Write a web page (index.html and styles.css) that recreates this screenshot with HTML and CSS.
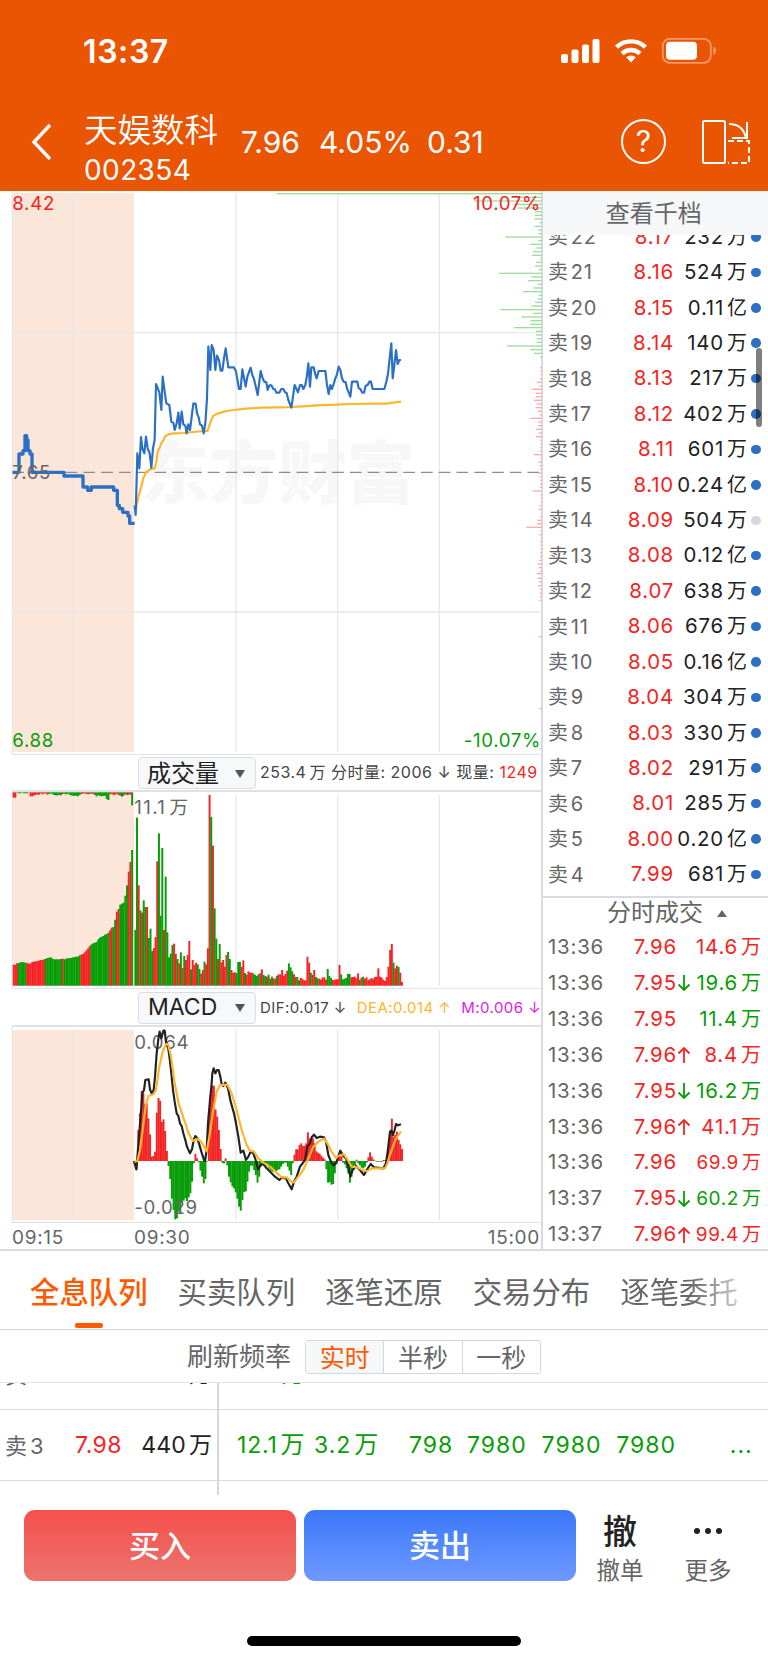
FILE: index.html
```
<!DOCTYPE html>
<html lang="zh-CN">
<head>
    <meta charset="UTF-8">
    <meta name="viewport" content="width=device-width, initial-scale=1.0">
    <title>天娱数科 002354</title>
    <link rel="stylesheet" href="styles.css">
</head>
<body>
    <div class="header">
        <div class="status">
            <span class="clock">13:37</span>
            <svg class="status_icons" width="157" height="28" viewBox="0 0 157 28">
                <g fill="#fff">
                    <rect x="1" y="17" width="7" height="9" rx="2"/>
                    <rect x="11.5" y="12.5" width="7" height="13.5" rx="2"/>
                    <rect x="22" y="7.5" width="7" height="18.5" rx="2"/>
                    <rect x="32.5" y="2" width="7" height="24" rx="2"/>
                    <path d="M71 25.5l-4.8-5.2a7.2 7.2 0 0 1 9.6 0z"/>
                </g>
                <g fill="none" stroke="#fff" stroke-width="4.4">
                    <path d="M56.5 10.2a21 21 0 0 1 29 0"/>
                    <path d="M62 16.6a13 13 0 0 1 18 0"/>
                </g>
                <rect x="102.8" y="1.8" width="48" height="24" rx="7" fill="none" stroke="#fff" stroke-opacity=".4" stroke-width="1.8"/>
                <rect x="106" y="4.8" width="31" height="18" rx="4" fill="#fff"/>
                <path d="M153.3 9.5c3.6 1 3.6 7.400 0 8.400z" fill="#fff" fill-opacity=".4"/>
            </svg>
        </div>
        <div class="title_bar">
            <svg class="back" width="24" height="40" viewBox="0 0 24 40"><path d="M20 3L4 20l16 17" fill="none" stroke="#fff" stroke-width="3.4"/></svg>
            <div class="stock">
                <div class="stock_name">天娱数科</div>
                <div class="stock_code">002354</div>
            </div>
            <div class="quote"><span class="q1">7.96</span><span class="q2">4.05%</span><span>0.31</span></div>
            <div class="help">?</div>
            <svg class="rotate" width="50" height="46" viewBox="0 0 50 46" fill="none" stroke="#fff" stroke-width="2">
                <rect x="2" y="2" width="22" height="42" rx="1.500"/>
                <path d="M28 5c9 0 15 5 17 14M46 3v16H31"/>
                <path d="M27 22h21v22H27" stroke-dasharray="6 3"/>
            </svg>
        </div>
    </div>

    <div class="main">
        <div class="charts">
            <svg class="price" viewBox="0 18 1626 1689">
                <rect class="pre" x="38" y="24" width="364" height="1677"/>
                <text class="mark" x="422" y="939">东方财富</text>
                <path class="grid" d="M37 18v1689M219 24v1677M708 24v1677M1013 24v1677M1318 24v1677M37 443h1589M37 1281h1589"/>
                <path class="dash" d="M37 862h1589"/>
                <g id="depth"></g>
                <polyline class="avg" points="407,975 412,950 418,925 424,905 429,882 438,862 450,853 464,850 468,835 474,797 480,786 485,772 490,767 496,753 505,748 520,745 550,744 580,741 610,738 622,738 627,725 632,710 640,692 655,685 680,678 700,675 740,671 780,668 840,667 874,666 910,664 950,661 1010,659 1050,657 1110,656 1160,656 1180,653 1203,650"/>
                <polyline class="now pre_line" points="38,862 57,862 57,807 69,807 69,797 75,797 75,752 80,752 80,765 84,765 84,797 90,797 90,807 96,807 96,862 192,862 192,873 249,873 249,906 263,906 263,916 274,916 274,906 341,906 341,916 352,916 352,961 358,961 358,971 368,971 368,982 384,982 384,993 389,993 389,1015 404,1015"/>
                <polyline class="now" points="404,961 407,990 412,805 418,850 423,756 427,790 433,805 438,755 443,790 449,805 454,848 459,790 464,765 468,597 478,622 484,675 488,575 494,620 499,655 508,660 514,710 520,713 524,735 530,715 535,683 539,730 545,680 550,718 556,722 560,745 565,718 570,735 580,656 587,656 591,685 596,697 600,718 606,722 611,745 616,715 621,640 625,485 631,555 635,480 641,495 646,555 651,512 657,525 662,557 667,557 672,520 677,490 685,547 702,547 708,560 717,612 722,612 727,553 737,605 742,575 752,548 757,570 762,582 773,630 782,558 788,580 793,590 799,592 803,615 808,601 814,601 820,612 825,613 829,623 838,623 844,612 850,612 855,622 860,624 865,645 874,668 879,635 884,600 894,622 900,600 905,600 910,612 916,600 921,570 925,535 930,605 934,547 941,547 945,565 950,580 956,558 976,558 981,600 986,627 991,600 996,612 1001,597 1006,580 1011,568 1016,545 1021,555 1026,580 1031,590 1037,592 1041,610 1051,635 1056,590 1072,590 1076,610 1081,612 1087,623 1092,623 1097,602 1103,600 1108,590 1113,590 1118,612 1153,612 1159,590 1164,567 1169,520 1174,475 1178,580 1183,540 1188,495 1193,537 1198,525 1203,525"/>
                <text class="axis up" x="37" y="76">8.42</text>
                <text class="axis up end" x="1623" y="76">10.07%</text>
                <text class="axis" x="37" y="882">7.65</text>
                <text class="axis down" x="37" y="1685">6.88</text>
                <text class="axis down end" x="1623" y="1685">-10.07%</text>
            </svg>

            <div class="info">
                <div class="select"><span>成交量</span><i></i></div>
                <div class="info_text vol_text"><span>253.4<b>万</b> 分时量: 2006 ↓ 现量: </span><span class="up">1249</span></div>
            </div>
            <svg class="volume" viewBox="0 186 1626 588">
                <rect class="pre" x="38" y="188" width="364" height="579"/>
                <path class="grid" d="M37 186v588M219 195v572M708 195v572M1013 195v572M1318 195v572"/>
                <g id="preBars"></g>
                <g id="topBars"></g>
                <g id="volBars"></g>
                <text class="axis vol_max" x="403" y="252">11.1<tspan dx="10">万</tspan></text>
            </svg>

            <div class="info">
                <div class="select macd_select"><span>MACD</span><i></i></div>
                <div class="info_text macd_text"><span>DIF:0.017 ↓</span><span class="dea">DEA:0.014 ↑</span><span class="m">M:0.006 ↓</span></div>
            </div>
            <svg class="macd" viewBox="0 141 1626 585">
                <rect class="pre" x="38" y="150" width="364" height="570"/>
                <path class="grid" d="M37 141v585M219 150v570M708 150v570M1013 150v570M1318 150v570"/>
                <g id="macdBars"></g>
                <text class="axis" x="403" y="207">0.064</text>
                <text class="axis" x="403" y="702">-0.029</text>
                <polyline class="dif_line" points="402,543 409,568 413,520 417,470 421,420 427,340 432,330 436,300 446,298 450,328 455,340 461,330 465,290 470,220 476,170 479,155 484,175 490,152 494,152 499,195 504,200 509,235 514,280 519,330 524,365 530,400 535,408 540,430 545,438 550,460 556,480 561,500 570,520 576,508 581,480 586,468 592,475 597,490 604,515 612,540 615,543 620,510 624,430 630,360 635,310 637,280 641,265 646,280 651,270 656,270 661,290 665,312 670,318 676,308 684,325 692,365 702,400 708,430 715,470 722,518 730,512 738,540 745,530 752,515 760,520 767,540 774,568 782,555 790,552 800,565 815,580 825,590 838,600 845,593 858,595 864,608 875,628 882,605 890,590 900,560 915,540 922,500 930,490 935,472 942,464 950,474 960,470 972,472 978,485 985,525 995,550 1002,556 1010,545 1021,512 1030,528 1038,535 1045,560 1051,590 1058,570 1068,558 1080,570 1092,585 1100,570 1112,552 1122,562 1150,565 1158,550 1165,500 1170,455 1174,452 1179,465 1184,450 1188,432 1194,436 1203,433"/>
                <polyline class="dea_line" points="404,546 412,543 420,510 428,450 438,370 446,348 460,343 468,330 478,260 488,215 498,192 505,195 513,230 524,310 536,370 556,430 566,460 578,483 590,477 602,483 612,500 620,514 628,470 640,390 650,335 660,315 682,314 695,340 710,390 725,450 740,495 750,512 762,515 775,535 790,548 810,560 830,578 845,592 860,592 875,606 882,607 895,590 910,570 925,535 940,500 955,485 972,476 982,490 995,515 1008,534 1020,525 1032,523 1043,540 1055,560 1072,562 1090,572 1102,573 1115,565 1155,565 1162,550 1175,510 1188,475 1203,455"/>
            </svg>
            <div class="times"><span class="t1">09:15</span><span>09:30</span><span class="t3">15:00</span></div>
        </div>

        <div class="side">
            <div class="side_head">查看千档</div>
            <div class="book">
                <div class="book_rows" id="book"></div>
                <div class="scrollbar"></div>
            </div>
            <div class="trade_head">分时成交<i></i></div>
            <div class="trades" id="trades"></div>
        </div>
    </div>

    <div class="tabs">
        <span class="tab on">全息队列</span>
        <span class="tab">买卖队列</span>
        <span class="tab">逐笔还原</span>
        <span class="tab">交易分布</span>
        <span class="tab">逐笔委托</span>
    </div>

    <div class="rate">
        <span class="rate_label">刷新频率</span>
        <div class="seg"><span class="on">实时</span><span>半秒</span><span>一秒</span></div>
    </div>

    <div class="queue">
        <div class="q_row q_first">
            <div class="q_left"><span class="q_name">卖<b>4</b></span><span class="q_price">7.99</span><span class="q_vol">681<b>万</b></span></div>
            <div class="q_right"><span class="c1">1.2<b>万</b></span></div>
        </div>
        <div class="q_row">
            <div class="q_left"><span class="q_name">卖<b>3</b></span><span class="q_price">7.98</span><span class="q_vol">440<b>万</b></span></div>
            <div class="q_right"><span class="c1">12.1<b>万</b></span><span class="c2">3.2<b>万</b></span><span class="c3">798</span><span class="c4">7980</span><span class="c4">7980</span><span class="c4">7980</span><span class="more">...</span></div>
        </div>
        <div class="q_row">
            <div class="q_left"></div>
            <div class="q_right"></div>
        </div>
    </div>

    <div class="bottom">
        <a class="btn buy">买入</a>
        <a class="btn sell">卖出</a>
        <div class="tool"><span class="tool_icon">撤</span><span>撤单</span></div>
        <div class="tool tool_more">
            <span class="tool_icon"><svg width="30" height="8" viewBox="0 0 30 8"><circle cx="4" cy="4" r="3"/><circle cx="15" cy="4" r="3"/><circle cx="26" cy="4" r="3"/></svg></span>
            <span>更多</span>
        </div>
    </div>
    <div class="home"></div>

<script>
    var RED = '#f52424';
    var GREEN = '#069d06';

    // 卖盘: 价格 数量 单位
    var asks = ['8.17 232 万', '8.16 524 万', '8.15 0.11 亿', '8.14 140 万', '8.13 217 万', '8.12 402 万', '8.11 601 万',
        '8.10 0.24 亿', '8.09 504 万', '8.08 0.12 亿', '8.07 638 万', '8.06 676 万', '8.05 0.16 亿', '8.04 304 万',
        '8.03 330 万', '8.02 291 万', '8.01 285 万', '8.00 0.20 亿', '7.99 681 万'];
    document.getElementById('book').innerHTML = asks.map(function (row, i) {
        var a = row.split(' ');
        var no = 22 - i;
        return '<div class="book_row"><span class="name">卖<b>' + no + '</b></span><span class="p">' + a[0] +
            '</span><span class="v">' + a[1] + '<b>' + a[2] + '</b></span><i class="dot' + (no === 14 ? ' gray' : '') + '"></i></div>';
    }).join('');

    // 成交: 时间 价格 箭头 数量 颜色
    var deals = ['13:36 7.96 - 14.6 up', '13:36 7.95 ↓ 19.6 down', '13:36 7.95 - 11.4 down', '13:36 7.96 ↑ 8.4 up',
        '13:36 7.95 ↓ 16.2 down', '13:36 7.96 ↑ 41.1 up', '13:36 7.96 - 69.9 up small', '13:37 7.95 ↓ 60.2 down small', '13:37 7.96 ↑ 99.4 up small'];
    var arrows = {
        '↓': '<svg width="14" height="18" viewBox="0 0 14 18"><path d="M7 1v15M1.500 10.500L7 16l5.500-5.500"/></svg>',
        '↑': '<svg width="14" height="18" viewBox="0 0 14 18"><path d="M7 17V2M1.500 7.500L7 2l5.500 5.500"/></svg>',
        '-': ''
    };
    document.getElementById('trades').innerHTML = deals.map(function (row) {
        var a = row.split(' ');
        return '<div class="trade"><span class="t">' + a[0] + '</span><span class="p">' + a[1] + '</span><span class="arrow ' + a[4] + '">' +
            arrows[a[2]] + '</span><span class="v ' + a[4] + ' ' + (a[5] || '') + '">' + a[3] + '<b>万</b></span></div>';
    }).join('');

    function rect(x, y, w, h, color) {
        return '<rect x="' + x.toFixed(1) + '" y="' + y + '" width="' + w + '" height="' + h + '" fill="' + color + '"/>';
    }

    // 挂单分布
    var depth = '26:20 37:727 48:612 58:733 69:742 80:795 91:795 102:793 113:808 124:793 135:805 146:805 156:706 167:805 178:780 189:800 200:790 211:786 222:810 232:797 243:795 254:806 265:687 276:784 287:774 298:803 309:789 320:759 331:807 342:803 352:795 363:784 374:691 385:788 396:754 407:782 418:780 428:732 439:798 450:798 461:800 472:800 483:711 494:780 505:792 516:810 ' +
        '548:810 559:811 570:812 581:810 592:801 603:809 613:785 625:798 635:798 646:791 657:800 668:797 679:803 690:810 700:781 711:803 722:805 733:798 744:806 755:798 766:810 777:812 788:811 799:809 809:792 820:811 831:806 842:809 853:810 864:804 875:811 886:811 897:810 907:809 918:788 929:811 940:812 951:812 962:809 973:806 984:812 995:811 1006:802 1016:801 1027:769 1038:811 1049:808 1060:812 1070:810 1081:811 1092:811 1103:810 1115:810 1126:808 1137:802 1148:806 1159:810 1166:800 1180:802 1191:807 1202:805 1213:810 1224:809 1235:810 1246:808 1355:807 1571:808 1691:810';
    document.getElementById('depth').innerHTML = depth.split(' ').map(function (s) {
        var a = s.split(':');
        var x = 810 + Number(a[1]);
        return rect(x, a[0] - 2, 1626 - x, 4, a[0] < 530 ? '#9fdc9f' : '#ffabab');
    }).join('');

    // 柱状图, r 红 g 绿
    function bars(id, data, x0, x1, base) {
        var list = data.split(' ');
        var w = (x1 - x0) / list.length;
        document.getElementById(id).innerHTML = list.map(function (s, i) {
            var y = Number(s.slice(1));
            return rect(x0 + i * w, Math.min(y, base), (w + 0.8).toFixed(2), Math.abs(base - y), s[0] === 'r' ? RED : GREEN);
        }).join('');
    }
    bars('preBars', 'r704 r704 r700 g699 g697 g696 g697 g698 r699 r701 r700 r696 r695 r694 r693 r692 r690 r690 r688 g686 g684 g683 g682 g686 g688 g688 g688 g688 g687 r686 g688 g686 g685 g684 g684 g682 g681 g680 g680 g676 r674 r672 r667 r661 r655 r648 g643 g640 g638 g636 g628 g623 g620 g618 g614 g612 g608 r601 r593 g591 g569 r545 r537 g524 g521 g518 g497 g466 r425 r396 g360', 38, 398.5, 767);
    bars('topBars', 'r203 r203 r188 g190 g190 g188 g190 g190 g190 g188 r199 r199 r196 r195 r193 r194 g190 r193 g190 r191 r194 g192 g190 g193 g195 g196 g196 g195 g196 r192 g191 g193 g191 g194 g196 g197 g198 g197 g199 g195 r192 r191 g190 r192 r193 g191 r192 r191 g195 g199 g196 g197 g199 g198 g197 g207 g210 r193 g191 r195 r194 r191 g195 r197 g200 g197 g193 r195 r194 r194 g226', 38, 398.5, 187);
    bars('volBars', 'g600 g263 r466 g541 r548 g511 g531 r531 g624 g596 g663 r654 r621 r394 g310 g557 g354 r600 g440 g607 g682 g671 g645 r641 r672 g687 r700 g667 r714 g678 r690 r675 r633 g718 r690 r705 r698 g703 g717 r731 r720 g695 r703 r655 r195 g261 r347 g535 g626 r687 g642 r697 r690 r710 r675 g666 g687 r720 r728 r727 g729 g696 g696 r710 r691 g729 r734 r724 r728 r728 g730 g735 g738 g733 r730 r718 g735 g738 r740 g734 g746 r740 g746 r745 g737 r733 r733 r720 r738 r732 r722 g700 g712 g724 r733 r741 g741 g751 r744 r746 r751 r751 r680 r698 g728 r734 r720 g741 g745 r746 r749 r742 r742 r749 g717 g738 g744 r750 r750 r748 r748 r705 g733 g748 g746 g744 g732 g732 r742 r741 r740 r745 r730 g750 r743 g740 r746 r742 r750 r748 r744 r747 r741 r740 r715 r740 r743 r749 r753 r741 r710 r660 r642 g698 r715 r707 g711 r728 r756', 403, 1208, 767);

    var macd = [568, 450, 400, 333, 340, 372, 370, 415, 463, 530, 528, 515, 398, 354, 362, 426, 418, 453, 513, 558, 597, 656, 690, 718, 715, 695, 700, 668, 662, 655, 663, 652, 640, 605, 550, 522, 535, 546, 572, 590, 610, 597, 545, 400, 345, 317, 317, 388, 410, 450, 507, 548, 550, 535, 556, 590, 607, 619, 625, 637, 656, 680, 692, 660, 636, 634, 605, 575, 557, 557, 570, 585, 608, 590, 560, 555, 552, 550, 553, 566, 572, 575, 572, 574, 570, 568, 560, 552, 548, 548, 560, 572, 585, 550, 524, 508, 508, 495, 490, 498, 497, 490, 457, 475, 478, 475, 490, 514, 518, 521, 527, 533, 538, 568, 608, 606, 614, 612, 580, 553, 533, 529, 530, 548, 553, 565, 580, 608, 590, 565, 555, 539, 550, 556, 563, 565, 560, 548, 532, 517, 530, 538, 542, 545, 545, 545, 545, 540, 540, 525, 495, 455, 416, 470, 465, 455, 480, 493, 507];
    bars('macdBars', macd.map(function (y) {
        return (y < 543 ? 'r' : 'g') + y;
    }).join(' '), 407, 1208, 543);
</script>
</body>
</html>
```

FILE: styles.css
```
*{
    margin: 0;
    padding: 0;
    box-sizing: border-box;
}
body{
    width: 768px;
    height: 1663px;
    background: #fff;
    font-family: Inter, "Noto Sans CJK SC", sans-serif;
    line-height: 1.2;
    color: #666;
    overflow: hidden;
}
b, i{
    font-weight: inherit;
    font-style: normal;
}
.up{ color: #f52424; }
.down{ color: #069d06; }

/* header */
.header{
    height: 191px;
    background: #ea5504;
    color: #fff;
}
.status{
    height: 102px;
    padding: 31px 51px 0 83px;
    display: flex;
    justify-content: space-between;
}
.clock{
    font-size: 32px;
    line-height: 41px;
    font-weight: 600;
    letter-spacing: .6px;
}
.status_icons{
    margin-top: 6px;
}
.title_bar{
    display: flex;
    align-items: center;
    height: 79px;
    padding-left: 30px;
}
.stock{
    width: 157px;
    margin-left: 30px;
    padding-top: 14px;
}
.stock_name{
    font-size: 33.500px;
    line-height: 39px;
    font-weight: 350;
    font-family: "Noto Sans CJK SC", sans-serif;
    white-space: nowrap;
}
.stock_code{
    margin-top: 3px;
    font-size: 28px;
    line-height: 40px;
    letter-spacing: .4px;
}
.quote{
    display: flex;
    width: 380px;
    font-size: 30px;
}
.q1{ width: 78px; }
.q2{ width: 108px; }
.help{
    width: 45px;
    height: 45px;
    border: 2px solid #fff;
    border-radius: 50%;
    font-size: 30px;
    line-height: 41px;
    text-align: center;
}
.rotate{
    margin-left: 35px;
}

/* charts */
.main{
    display: flex;
    height: 1060px;
    border-bottom: 2px solid #d9dbe3;
}
.charts{
    width: 543px;
    border-right: 2px solid #d9dbe3;
}
.charts svg{
    display: block;
    width: 542px;
}
.price{ height: 563px; }
.volume{ height: 196px; }
.macd{ height: 195px; }
.pre{ fill: #fce6d9; }
.grid{
    fill: none;
    stroke: #e6e8ef;
    stroke-width: 4;
}
.dash{
    stroke: #8c8c8c;
    stroke-width: 4;
    stroke-dasharray: 35 18.3;
}
.mark{
    font: 900 206px "Noto Sans CJK SC", sans-serif;
    fill: #f7f7f8;
}
.axis{
    font-size: 56px;
    letter-spacing: 2px;
    fill: #666;
}
.vol_max{ letter-spacing: 4px; }
.axis.up{ fill: #f52424; }
.axis.down{ fill: #069d06; }
.end{ text-anchor: end; }
.now, .avg, .dif_line, .dea_line{
    fill: none;
    stroke-width: 6.500;
    stroke-linejoin: round;
}
.now{ stroke: #2b70c4; }
.pre_line{ stroke-width: 10; }
.avg, .dea_line{ stroke: #fdb52b; }
.dif_line{ stroke: #222; }
.info{
    display: flex;
    align-items: center;
    height: 38px;
    margin-left: 12px;
    padding: 1px 0 0 126px;
    border-top: 1px solid #e3e5ea;
    border-bottom: 2px solid #dfe1e8;
}
.volume + .info{
    height: 39px;
    padding-top: 2px;
}
.select{
    display: flex;
    flex: none;
    align-items: center;
    justify-content: space-between;
    width: 118px;
    height: 32px;
    padding: 2px 10px 0 8px;
    border: 1px solid #d9dce2;
    border-radius: 4px;
    background: #f6f8fa;
    color: #222;
    font-size: 24px;
}
.macd_select{
    padding: 0 10px 0 9px;
    font-size: 23px;
}
.select i{
    border: 5px solid transparent;
    border-top: 8px solid #555;
    border-bottom: 0;
}
.info_text{
    display: flex;
    margin-left: 4px;
    font-size: 16px;
    letter-spacing: .5px;
    color: #444;
    white-space: pre;
}
.vol_text b{ margin-left: 3px; }
.macd_text{
    font-size: 15px;
    letter-spacing: .45px;
}
.dea{
    margin-left: 10px;
    color: #fdb52b;
}
.m{
    margin-left: 10px;
    color: #e11be1;
}
.times{
    display: flex;
    height: 29px;
    margin-left: 12px;
    padding-right: 1px;
    border-top: 1px solid #dfe1e8;
    font-size: 19px;
    letter-spacing: .7px;
    line-height: 29px;
}
.t1{ width: 122px; }
.t3{ margin-left: auto; }

/* order book */
.side{
    flex: 1;
}
.side_head{
    height: 44px;
    padding-right: 4px;
    background: #f5f7f9;
    font-size: 24px;
    line-height: 45px;
    text-align: center;
}
.book{
    position: relative;
    height: 663px;
    overflow: hidden;
    border-bottom: 2px solid #d9dbe3;
}
.book_rows{
    margin-top: -15.8px;
}
.book_row{
    display: flex;
    align-items: center;
    height: 35.43px;
    padding: 0 8px 0 5px;
    font-size: 20.4px;
    letter-spacing: .8px;
}
.book_row .name{
    width: 60px;
    font-size: 20px;
}
.name b{ margin-left: 2px; }
.book_row .p{
    width: 66px;
    text-align: right;
    color: #f52424;
}
.book_row .v{
    width: 73px;
    text-align: right;
    white-space: nowrap;
    color: #222;
}
.v b{
    margin-left: 3px;
    font-size: 20px;
    letter-spacing: 0;
}
.dot{
    width: 9.5px;
    height: 9.5px;
    margin-left: 4px;
    border-radius: 50%;
    background: #2b70c4;
}
.gray{ background: #d5d8de; }
.scrollbar{
    position: absolute;
    top: 113px;
    right: 7px;
    width: 6px;
    height: 79px;
    border-radius: 3px;
    background: rgba(0, 0, 0, .5);
}
.trade_head{
    display: flex;
    align-items: center;
    height: 31px;
    padding-left: 64px;
    font-size: 24px;
}
.trade_head i{
    margin-left: 14px;
    border: 5px solid transparent;
    border-bottom: 7px solid #666;
    border-top: 0;
}
.trade{
    display: flex;
    align-items: center;
    height: 35.96px;
    padding-left: 5px;
    font-size: 20.4px;
    letter-spacing: .8px;
}
.trade .t{ width: 80px; }
.trade .p{
    width: 49px;
    text-align: right;
    color: #f52424;
}
.arrow{
    width: 16px;
    height: 18px;
    padding-left: 0;
}
.arrow svg{
    display: block;
    fill: none;
    stroke: currentColor;
    stroke-width: 1.800;
}
.trade .v{
    width: 68px;
    text-align: right;
    white-space: nowrap;
}
.trade .small{
    padding-top: 1px;
    font-size: 19px;
    letter-spacing: .6px;
}
.trade .small b{ font-size: 19px; }

/* tabs */
.tabs{
    display: flex;
    gap: 30px;
    height: 79px;
    padding-left: 30px;
    border-bottom: 1px solid #d5d7de;
    font-size: 29.4px;
    line-height: 84px;
    white-space: nowrap;
}
.tab{
    flex: none;
}
.tab.on{
    position: relative;
    color: #ff5a00;
    font-weight: 500;
}
.tab.on::after{
    content: "";
    position: absolute;
    left: 45px;
    bottom: 1px;
    width: 28px;
    height: 5px;
    border-radius: 2px;
    background: #ff5a00;
}
.tab:last-child{
    background: linear-gradient(90deg, #666 58%, #ccc 100%);
    -webkit-background-clip: text;
    color: transparent;
}
.rate{
    display: flex;
    align-items: center;
    justify-content: center;
    height: 53px;
    padding: 2px 40px 0 0;
    border-bottom: 1px solid #e3e5ea;
    font-size: 26px;
}
.seg{
    display: flex;
    width: 236px;
    height: 34px;
    margin-left: 14px;
    border: 1px solid #d3d7de;
    border-radius: 3px;
    font-size: 25px;
    line-height: 34px;
    text-align: center;
}
.seg span{
    flex: 1;
    height: 32px;
    border-left: 1px solid #d3d7de;
}
.seg .on{
    border-left: 0;
    background: #f5f7f9;
    color: #ff5a00;
}

/* queue */
.queue{
    height: 112px;
    overflow: hidden;
}
.q_row{
    display: flex;
    height: 71px;
    border-bottom: 1.500px solid #d9dbe3;
    font-size: 23px;
    letter-spacing: 1px;
}
.q_first{ margin-top: -44px; }
.q_left, .q_right{
    display: flex;
    align-items: center;
    padding-top: 2px;
}
.q_left{
    width: 219px;
    border-right: 2px solid #d5d7de;
    padding-left: 5px;
}
.q_name{
    width: 70px;
    font-size: 22px;
}
.q_name b{ margin-left: 2px; }
.q_price{
    width: 49px;
    letter-spacing: .5px;
    color: #f52424;
}
.q_vol{
    width: 88px;
    text-align: right;
    letter-spacing: .2px;
    color: #222;
}
.q_right{
    flex: 1;
    padding-left: 18px;
    color: #069d06;
}
.q_vol b{
    margin-left: 3px;
    letter-spacing: 0;
}
.c1{ width: 77px; }
.c2{ width: 95px; }
.c3{ width: 58px; }
.c4{ width: 74.600px; }
.q_first .c1{ padding-left: 9px; }
.q_right b{
    margin-left: 3px;
    font-size: 24px;
    line-height: 1;
}
.q_row .c1{ letter-spacing: .8px; }
.more{ margin-left: 39px; }

/* bottom */
.bottom{
    display: flex;
    height: 141px;
    padding: 15px 0 0 24px;
}
.btn{
    width: 272px;
    height: 71px;
    margin-right: 8px;
    border-radius: 11px;
    color: #fff;
    font-size: 31px;
    font-weight: 500;
    line-height: 71px;
    text-align: center;
}
.buy{ background: linear-gradient(#f4504b, #ec736d); }
.sell{ background: linear-gradient(#3b78f9, #6e99ff); }
.tool{
    display: flex;
    flex-direction: column;
    align-items: center;
    width: 72px;
    font-size: 23.500px;
    line-height: 37px;
}
.tool_more{ margin-left: 16px; }
.tool_icon{
    display: flex;
    align-items: center;
    height: 42px;
    font-size: 34px;
    font-weight: 500;
    color: #222;
}
.tool_icon svg{ fill: #222; }
.home{
    width: 274px;
    height: 10px;
    margin-left: 247px;
    border-radius: 5px;
    background: #000;
}
```
